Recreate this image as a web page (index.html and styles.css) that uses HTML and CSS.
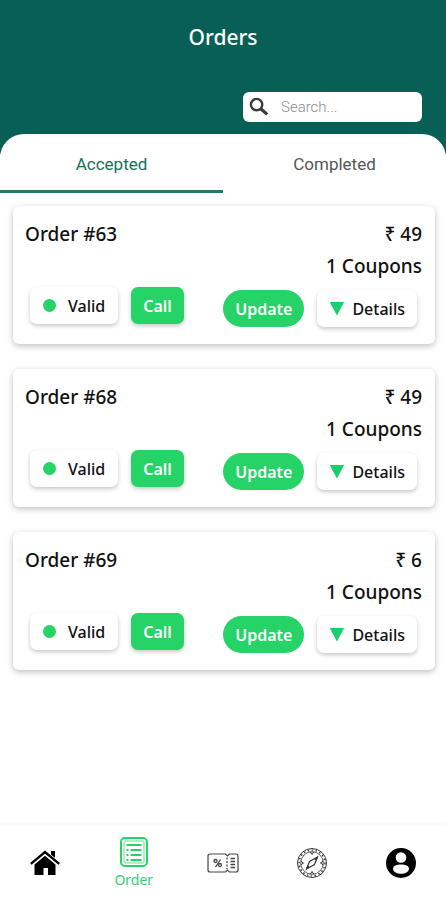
FILE: index.html
```html
<!DOCTYPE html>
<html lang="en">
<head>
<meta charset="utf-8">
<meta name="viewport" content="width=device-width, initial-scale=1">
<title>Orders</title>
<link rel="stylesheet" href="styles.css">
</head>
<body>
<div class="app">
  <header class="header">
    <h1 class="title">Orders</h1>
    <label class="search">
      <svg class="search-icon" viewBox="0 0 20 20" aria-hidden="true"><circle cx="7.6" cy="7.6" r="5.7" fill="none" stroke="#3a3a3a" stroke-width="2.4"/><path d="M11.8 11.8 18.2 17.4" stroke="#3a3a3a" stroke-width="3.2"/></svg>
      <input class="search-input" type="search" placeholder="Search..." aria-label="Search orders">
    </label>
  </header>
  <main class="sheet">
    <div class="tabs" role="tablist">
      <button class="tab tab-active" role="tab" aria-selected="true">Accepted</button>
      <button class="tab" role="tab" aria-selected="false">Completed</button>
    </div>
    <div class="orders">
      <article class="card">
        <div class="side">
          <h2 class="line">Order #63</h2>
          <div class="actions">
            <button class="btn btn-valid"><span class="dot"></span>Valid</button>
            <button class="btn btn-call">Call</button>
          </div>
        </div>
        <div class="side side-end">
          <p class="line">₹ 49</p>
          <p class="line">1 Coupons</p>
          <div class="actions">
            <button class="btn btn-update">Update</button>
            <button class="btn btn-details"><span class="arrow"></span>Details</button>
          </div>
        </div>
      </article>
      <article class="card">
        <div class="side">
          <h2 class="line">Order #68</h2>
          <div class="actions">
            <button class="btn btn-valid"><span class="dot"></span>Valid</button>
            <button class="btn btn-call">Call</button>
          </div>
        </div>
        <div class="side side-end">
          <p class="line">₹ 49</p>
          <p class="line">1 Coupons</p>
          <div class="actions">
            <button class="btn btn-update">Update</button>
            <button class="btn btn-details"><span class="arrow"></span>Details</button>
          </div>
        </div>
      </article>
      <article class="card">
        <div class="side">
          <h2 class="line">Order #69</h2>
          <div class="actions">
            <button class="btn btn-valid"><span class="dot"></span>Valid</button>
            <button class="btn btn-call">Call</button>
          </div>
        </div>
        <div class="side side-end">
          <p class="line">₹ 6</p>
          <p class="line">1 Coupons</p>
          <div class="actions">
            <button class="btn btn-update">Update</button>
            <button class="btn btn-details"><span class="arrow"></span>Details</button>
          </div>
        </div>
      </article>
    </div>
  </main>
  <nav class="nav" aria-label="Main">
    <a class="nav-item" href="#home" aria-label="Home">
      <svg class="nav-icon" viewBox="0 0 32 32" aria-hidden="true"><path d="M16 8.8 26.500 17.500V28H19V21H14.500V28H5.500V17.500Z"/><path d="M22 4H26V13.500L22 10Z"/><path d="M1.800 17 16 5 30.200 17" fill="none" stroke="#fff" stroke-width="4"/><path d="M1.800 16.800 16 5 30.200 16.800" fill="none" stroke="#000" stroke-width="2.400"/></svg>
    </a>
    <a class="nav-item nav-active" href="#orders" aria-current="page">
      <svg class="nav-icon" viewBox="0 0 32 32" fill="none" stroke="#25d366" aria-hidden="true"><rect x="3" y="2" width="26" height="28" rx="4" stroke-width="2"/><rect x="6" y="5" width="20" height="22" rx="1" stroke-width=".7"/><path d="M8.500 9h15M8.500 14h2M8.500 19h2M8.500 24h2M12.500 14h11M12.500 19h11M12.500 24h11" stroke-width="1.800"/></svg>
      <span>Order</span>
    </a>
    <a class="nav-item" href="#coupons" aria-label="Coupons">
      <svg class="nav-icon" viewBox="0 0 32 32" fill="none" stroke="#444" aria-hidden="true"><path d="M3 7H18.500L20.500 9 22.500 7H29Q31 7 31 9V23Q31 25 29 25H22.500L20.500 23 18.500 25H3Q1 25 1 23V9Q1 7 3 7Z" stroke-width="1.200"/><path d="M20 10.500V22" stroke-width="1.300" stroke-dasharray="2 1.500"/><path d="M23.500 11.500h4.500M23.500 14.500h4.500M23.500 17.500h4.500M23.500 20.500h4.500" stroke-width="1.500"/><path d="M13.500 12.500 8.500 20" stroke-width="1.300"/><circle cx="8.500" cy="14" r="1.500" stroke-width="1.300"/><circle cx="13" cy="18" r="1.500" stroke-width="1.300"/></svg>
    </a>
    <a class="nav-item" href="#explore" aria-label="Explore">
      <svg class="nav-icon" viewBox="0 0 32 32" fill="none" stroke="#333" aria-hidden="true"><circle cx="16" cy="16" r="14.500"/><circle cx="16" cy="16" r="11.300" stroke-width=".8"/><circle cx="16" cy="16" r="12.900" stroke-width="1.400" stroke-dasharray="1.500 2.500"/><path d="M14 4.500 16 7.500 18 4.500M14 27.500 16 24.500 18 27.500M4.500 14 7.500 16 4.500 18M27.500 14 24.500 16 27.500 18"/><path d="M21.500 10 18.500 17.500 10.500 22 13.500 14.500Z" stroke-width="1.100"/><path d="M21.500 10 18.800 12 20.200 13.300ZM10.500 22 11.800 18.700 13.200 20.200Z" fill="#222"/></svg>
    </a>
    <a class="nav-item" href="#profile" aria-label="Profile">
      <svg class="nav-icon" viewBox="0 0 32 32" aria-hidden="true"><circle cx="16" cy="16" r="15"/><circle cx="16" cy="10.500" r="5.300" fill="#fff"/><path d="M8 21.500C8 16 24 16 24 21.500 24 28.500 8 28.500 8 21.500Z" fill="#fff"/></svg>
    </a>
  </nav>
</div>
</body>
</html>
```
FILE: styles.css
```css
* {
  box-sizing: border-box;
}

body {
  margin: 0;
  background: #fff;
  color: #111;
  font-family: "Noto Sans", "Open Sans", sans-serif;
}

button,
input {
  border: 0;
  font: inherit;
  color: inherit;
}

.app {
  display: flex;
  flex-direction: column;
  min-height: 100vh;
}

.header {
  display: flex;
  flex-direction: column;
  align-items: flex-end;
  padding: 21px 24px 32px;
  background: #085f55;
}

.title {
  align-self: center;
  margin: 0 0 39px;
  color: #fff;
  font-size: 21px;
  font-weight: 500;
  line-height: 32px;
}

.search {
  display: flex;
  align-items: center;
  gap: 12px;
  width: 179px;
  height: 30px;
  padding: 0 6px;
  border-radius: 6px;
  background: #fff;
}

.search-icon {
  flex: none;
  width: 20px;
  height: 20px;
}

.search-input {
  flex: 1;
  min-width: 0;
  padding: 0;
  outline: 0;
  background: none;
  font-family: Roboto, sans-serif;
  font-size: 15px;
}

.search-input::placeholder {
  color: #8c8c8c;
  font-weight: 300;
}

.sheet {
  flex: 1;
  margin-top: -20px;
  border-radius: 24px 24px 0 0;
  background: #fff;
}

.tabs {
  display: grid;
  grid-template-columns: 1fr 1fr;
}

.tab {
  height: 59px;
  padding: 4px 0 0;
  border-bottom: 3px solid transparent;
  background: none;
  color: #555;
  font-family: Roboto, sans-serif;
  font-size: 17px;
}

.tab-active {
  border-color: #2b7566;
  color: #17705a;
}

.orders {
  display: grid;
  gap: 25px;
  padding: 13px 11px 24px 13px;
}

.card {
  display: flex;
  justify-content: space-between;
  height: 138px;
  padding: 12px;
  padding-right: 13px;
  border-radius: 6px;
  background: #fff;
  box-shadow: 0 2px 6px rgba(0, 0, 0, 0.25);
}

.side {
  display: flex;
  flex-direction: column;
  justify-content: space-between;
}

.side-end {
  justify-content: flex-start;
  text-align: right;
}

.line {
  margin: 0;
  font-size: 19px;
  font-weight: 500;
  line-height: 32px;
}

.actions {
  display: flex;
  gap: 13px;
  padding: 0 5px 8px;
}

.side-end .actions {
  padding: 8px 5px 0;
}

.btn {
  display: flex;
  align-items: center;
  justify-content: center;
  height: 37px;
  padding: 0 12px;
  border-radius: 7px;
  font-size: 16px;
  font-weight: 500;
  box-shadow: 0 2px 4px rgba(0, 0, 0, 0.22);
}

.btn-valid,
.btn-details {
  background: #fff;
}

.btn-valid {
  padding: 0 13px;
}

.btn-call,
.btn-update {
  background: #25d366;
  color: #fff;
  font-weight: 600;
}

.btn-update {
  border-radius: 19px;
  box-shadow: none;
}

.dot {
  width: 13px;
  height: 13px;
  margin-right: 12px;
  border-radius: 50%;
  background: #25d366;
}

.arrow {
  width: 15px;
  height: 14px;
  margin-right: 8px;
  background: #17cf6c;
  clip-path: polygon(0 0, 100% 0, 50% 100%);
}

.nav {
  position: sticky;
  bottom: 0;
  display: grid;
  grid-template-columns: repeat(5, 1fr);
  height: 77px;
  border-top: 3px solid #fafafa;
  background: #fff;
}

.nav-item {
  display: flex;
  flex-direction: column;
  align-items: center;
  justify-content: center;
  color: #000;
  font-size: 14px;
  line-height: 20px;
  text-decoration: none;
}

.nav-active {
  gap: 2px;
  color: #3ccb7a;
}

.nav-icon {
  width: 32px;
  height: 32px;
}
```
